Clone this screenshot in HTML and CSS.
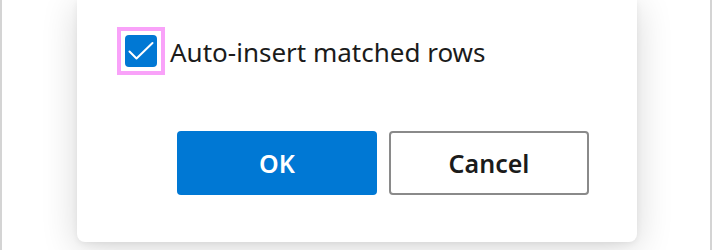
FILE: index.html
```html
<!DOCTYPE html>
<html>
<head>
<meta charset="utf-8">
<link rel="stylesheet" href="styles.css">
</head>
<body>
<div class="frame">
  <div class="dialog">
    <label class="check-row">
      <span class="focus-ring">
        <span class="box">
          <svg width="32" height="32" viewBox="0 0 32 32"><path d="M4.5 16.5 L11.5 23.5 L27.5 8" fill="none" stroke="#fff" stroke-width="2" stroke-linecap="round" stroke-linejoin="round"/></svg>
        </span>
      </span>
      <span class="label">Auto-insert matched rows</span>
    </label>
    <div class="buttons">
      <button class="btn primary">OK</button>
      <button class="btn secondary">Cancel</button>
    </div>
  </div>
</div>
</body>
</html>
```
FILE: styles.css
```css
* { box-sizing: border-box; }
html, body { margin: 0; padding: 0; background: #fff; }
.frame {
  width: 712px;
  height: 250px;
  border-left: 2px solid #d4d4d4;
  border-right: 2px solid #d4d4d4;
  background: #fff;
  overflow: hidden;
  font-family: "Noto Sans", "Open Sans", sans-serif;
  color: #1b1b1b;
}
.dialog {
  margin-left: 75px;
  width: 560px;
  height: 242px;
  background: #fff;
  border-radius: 0 0 8px 8px;
  box-shadow: 0 6px 36px rgba(0,0,0,0.16), 0 2px 6px rgba(0,0,0,0.06);
  padding: 27px 48px 0 40px;
  display: flex;
  flex-direction: column;
}
.check-row {
  display: flex;
  align-items: center;
  gap: 5px;
}
.focus-ring {
  width: 48px;
  height: 48px;
  border: 4px solid #f9a2f9;
  padding: 4px;
  display: flex;
}
.box {
  width: 32px;
  height: 32px;
  border-radius: 4px;
  background: #0078d4;
  display: block;
}
.box svg { display: block; }
.label {
  font-size: 26px;
  line-height: 34px;
  margin-top: 1px;
}
.buttons {
  margin-top: 56px;
  display: flex;
  justify-content: flex-end;
  gap: 12px;
}
.btn {
  width: 200px;
  height: 64px;
  border-radius: 4px;
  font-family: "Noto Sans", "Open Sans", sans-serif;
  font-size: 25px;
  font-weight: 600;
  cursor: pointer;
}
.primary {
  background: #0078d4;
  border: none;
  color: #fff;
}
.secondary {
  background: #fff;
  border: 2px solid #8a8a8a;
  color: #1b1b1b;
}
```
